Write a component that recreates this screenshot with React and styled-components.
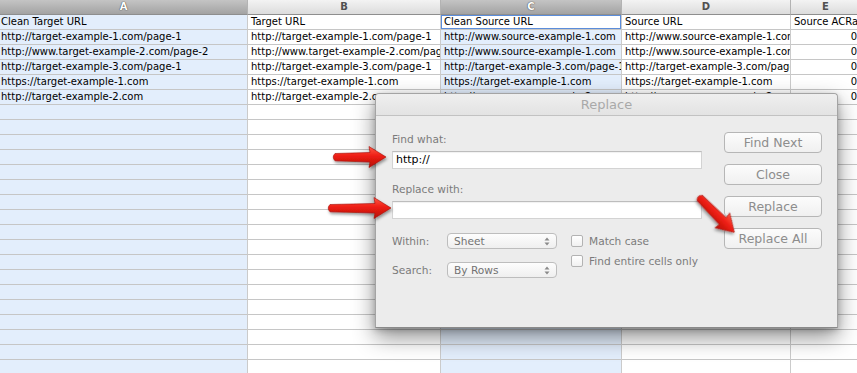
import React from 'react';
import styled, { createGlobalStyle, css } from 'styled-components';

const GlobalStyle = createGlobalStyle`
  html, body {
    margin: 0;
    padding: 0;
    background: #ffffff;
    overflow: hidden;
  }
`;

const Page = styled.div`
  position: relative;
  width: 857px;
  height: 373px;
  overflow: hidden;
  font-family: "DejaVu Sans", "Liberation Sans", sans-serif;
`;

const Sheet = styled.div`
  display: grid;
  grid-template-columns: 248px 193px 181px 169px 70px;
  grid-auto-rows: 15px;
  width: 861px;
`;

const HeadCell = styled.div`
  box-sizing: border-box;
  border-right: 1px solid #b3b3b3;
  border-bottom: 1px solid #8e8e8e;
  background: linear-gradient(#f3f3f3, #dcdcdc);
  color: #505050;
  font-size: 10px;
  font-weight: bold;
  line-height: 14px;
  text-align: center;

  ${(p) =>
    p.$selected &&
    css`
      background: linear-gradient(#c4c4c4, #a3a3a3);
      color: #ffffff;
      text-shadow: 0 0 1px #444, 0 0 1px #444;
    `}
`;

const Cell = styled.div`
  box-sizing: border-box;
  border-right: 1px solid #cbcbcb;
  border-bottom: 1px solid #c6c6c6;
  background: ${(p) => (p.$selected ? '#e3eefc' : '#ffffff')};
  color: #000000;
  font-size: 10px;
  line-height: 14px;
  padding: 0 ${(p) => p.$pad}px;
  text-align: ${(p) => p.$align};
  white-space: nowrap;
  overflow: hidden;

  ${(p) =>
    p.$active &&
    css`
      background: #ffffff;
      box-shadow: inset 0 0 0 1px #5b8ddb;
    `}
`;

const Dialog = styled.div`
  position: absolute;
  left: 375px;
  top: 93px;
  width: 463px;
  height: 235px;
  box-sizing: border-box;
  border: 1px solid #a4a4a4;
  border-bottom-color: #8a8a8a;
  border-radius: 4px 4px 0 0;
  background: #ececec;
  box-shadow: 0 9px 22px rgba(0, 0, 0, 0.45), 0 2px 6px rgba(0, 0, 0, 0.2);
`;

const TitleBar = styled.div`
  height: 22px;
  box-sizing: border-box;
  border-bottom: 1px solid #c2c2c2;
  background: linear-gradient(#efefef, #e3e3e3);
  border-radius: 4px 4px 0 0;
  color: #a9a9a9;
  font-size: 13px;
  line-height: 21px;
  text-align: center;
`;

const DialogBody = styled.div`
  display: flex;
  justify-content: space-between;
  padding: 16px 15px 0 16px;
`;

const FormColumn = styled.div`
  display: flex;
  flex-direction: column;
  width: 310px;
`;

const Label = styled.div`
  color: #7b7b7b;
  font-size: 10.6px;
  line-height: 14px;
  margin-top: ${(p) => p.$top || 0}px;
  margin-bottom: 5px;
`;

const TextField = styled.div`
  box-sizing: border-box;
  height: 18px;
  background: #ffffff;
  border: 1px solid #d3d3d3;
  border-top-color: #bdbdbd;
  box-shadow: inset 0 1px 1px rgba(0, 0, 0, 0.06);
  color: #000000;
  font-size: 11px;
  line-height: 16px;
  padding: 0 3px;
`;

const Options = styled.div`
  display: flex;
  gap: 14px;
  margin-top: 14px;
`;

const OptionGrid = styled.div`
  display: grid;
  grid-template-columns: 55px 110px;
  grid-auto-rows: 16px;
  row-gap: 13px;
  align-items: center;
`;

const OptionLabel = styled.div`
  color: #7b7b7b;
  font-size: 10.6px;
`;

const Select = styled.div`
  box-sizing: border-box;
  height: 16px;
  display: flex;
  align-items: center;
  justify-content: space-between;
  padding: 0 6px 0 6px;
  border: 1px solid #bdbdbd;
  border-radius: 4px;
  background: linear-gradient(#fdfdfd, #efefef);
  color: #727272;
  font-size: 10.6px;
`;

const Checks = styled.div`
  display: flex;
  flex-direction: column;
  gap: 4px;
`;

const CheckRow = styled.div`
  display: flex;
  align-items: center;
  gap: 6px;
  height: 16px;
  color: #7b7b7b;
  font-size: 10.6px;
`;

const Box = styled.span`
  box-sizing: border-box;
  width: 12px;
  height: 12px;
  border: 1px solid #b3b3b3;
  border-radius: 2px;
  background: linear-gradient(#ffffff, #f0f0f0);
`;

const ButtonColumn = styled.div`
  display: flex;
  flex-direction: column;
  gap: 11px;
`;

const Button = styled.div`
  box-sizing: border-box;
  width: 98px;
  height: 21px;
  border: 1px solid #b6b6b6;
  border-radius: 4px;
  background: linear-gradient(#fcfcfc, #f0f0f0);
  color: #8d8d8d;
  font-size: 12.5px;
  line-height: 19px;
  text-align: center;
`;

const ArrowSvg = styled.svg`
  position: absolute;
  left: ${(p) => p.$x}px;
  top: ${(p) => p.$y}px;
  transform-origin: 3px 12px;
  transform: rotate(${(p) => p.$rot || 0}deg);
  overflow: visible;
`;

const Stepper = () => (
  <svg width="6" height="9" viewBox="0 0 6 9">
    <path d="M3 0.5 L5.5 3.5 H0.5 Z M3 8.5 L5.5 5.5 H0.5 Z" fill="#8a8a8a" />
  </svg>
);

const Arrow = ({ x, y, length, rot, id }) => {
  const L = length;
  const c = 12;
  const d = `M4 ${c - 3.5} Q0.5 ${c} 4 ${c + 3.8} L${L - 16} ${c + 5} L${L - 17} ${c + 10.5} L${L} ${c} L${L - 17} ${c - 10.5} L${L - 16} ${c - 4.5} Z`;
  return (
    <ArrowSvg $x={x} $y={y} $rot={rot} width={L + 4} height="26" viewBox={`0 0 ${L + 4} 26`}>
      <defs>
        <linearGradient id={`g${id}`} x1="0" y1="0" x2="0" y2="1">
          <stop offset="0" stopColor="#ff5a48" />
          <stop offset="0.45" stopColor="#ee1f14" />
          <stop offset="1" stopColor="#b50e08" />
        </linearGradient>
        <filter id={`s${id}`} x="-20%" y="-40%" width="150%" height="190%">
          <feDropShadow dx="1" dy="2" stdDeviation="1.4" floodColor="#000" floodOpacity="0.4" />
        </filter>
      </defs>
      <path d={d} fill={`url(#g${id})`} stroke="#a30c06" strokeWidth="0.6" filter={`url(#s${id})`} />
    </ArrowSvg>
  );
};

const columns = [
  { key: 'A', selected: true, pad: 1 },
  { key: 'B', pad: 3 },
  { key: 'C', selected: true, pad: 3 },
  { key: 'D', pad: 3 },
  { key: 'E', pad: 3 },
];

const data = [
  ['Clean Target URL', 'Target URL', 'Clean Source URL', 'Source URL', 'Source ACRank'],
  ['http://target-example-1.com/page-1', 'http://target-example-1.com/page-1', 'http://www.source-example-1.com', 'http://www.source-example-1.com', '0'],
  ['http://www.target-example-2.com/page-2', 'http://www.target-example-2.com/page-2', 'http://www.source-example-1.com', 'http://www.source-example-1.com', '0'],
  ['http://target-example-3.com/page-1', 'http://target-example-3.com/page-1', 'http://target-example-3.com/page-1', 'http://target-example-3.com/page-1', '0'],
  ['https://target-example-1.com', 'https://target-example-1.com', 'https://target-example-1.com', 'https://target-example-1.com', '0'],
  ['http://target-example-2.com', 'http://target-example-2.com', 'http://www.source-example-2.com', 'http://www.source-example-2.com', '0'],
];

const rows = [...data, ...Array.from({ length: 19 }, () => ['', '', '', '', ''])];

export default function App() {
  return (
    <Page>
      <GlobalStyle />
      <Sheet>
        {columns.map((col) => (
          <HeadCell key={col.key} $selected={col.selected}>
            {col.key}
          </HeadCell>
        ))}
        {rows.map((row, r) =>
          row.map((value, c) => {
            const col = columns[c];
            const numeric = r > 0 && c === 4 && value !== '';
            return (
              <Cell
                key={`${r}-${c}`}
                $selected={col.selected}
                $active={r === 0 && c === 2}
                $pad={col.pad}
                $align={numeric ? 'right' : 'left'}
              >
                {value}
              </Cell>
            );
          })
        )}
      </Sheet>

      <Dialog>
        <TitleBar>Replace</TitleBar>
        <DialogBody>
          <FormColumn>
            <Label>Find what:</Label>
            <TextField>http://</TextField>
            <Label $top={13}>Replace with:</Label>
            <TextField />
            <Options>
              <OptionGrid>
                <OptionLabel>Within:</OptionLabel>
                <Select>
                  Sheet <Stepper />
                </Select>
                <OptionLabel>Search:</OptionLabel>
                <Select>
                  By Rows <Stepper />
                </Select>
              </OptionGrid>
              <Checks>
                <CheckRow>
                  <Box />
                  Match case
                </CheckRow>
                <CheckRow>
                  <Box />
                  Find entire cells only
                </CheckRow>
              </Checks>
            </Options>
          </FormColumn>
          <ButtonColumn>
            <Button>Find Next</Button>
            <Button>Close</Button>
            <Button>Replace</Button>
            <Button>Replace All</Button>
          </ButtonColumn>
        </DialogBody>
      </Dialog>

      <Arrow id="a1" x={331} y={145} length={55} />
      <Arrow id="a2" x={326} y={196} length={65} />
      <Arrow id="a3" x={696} y={185} length={53} rot={45} />
    </Page>
  );
}
